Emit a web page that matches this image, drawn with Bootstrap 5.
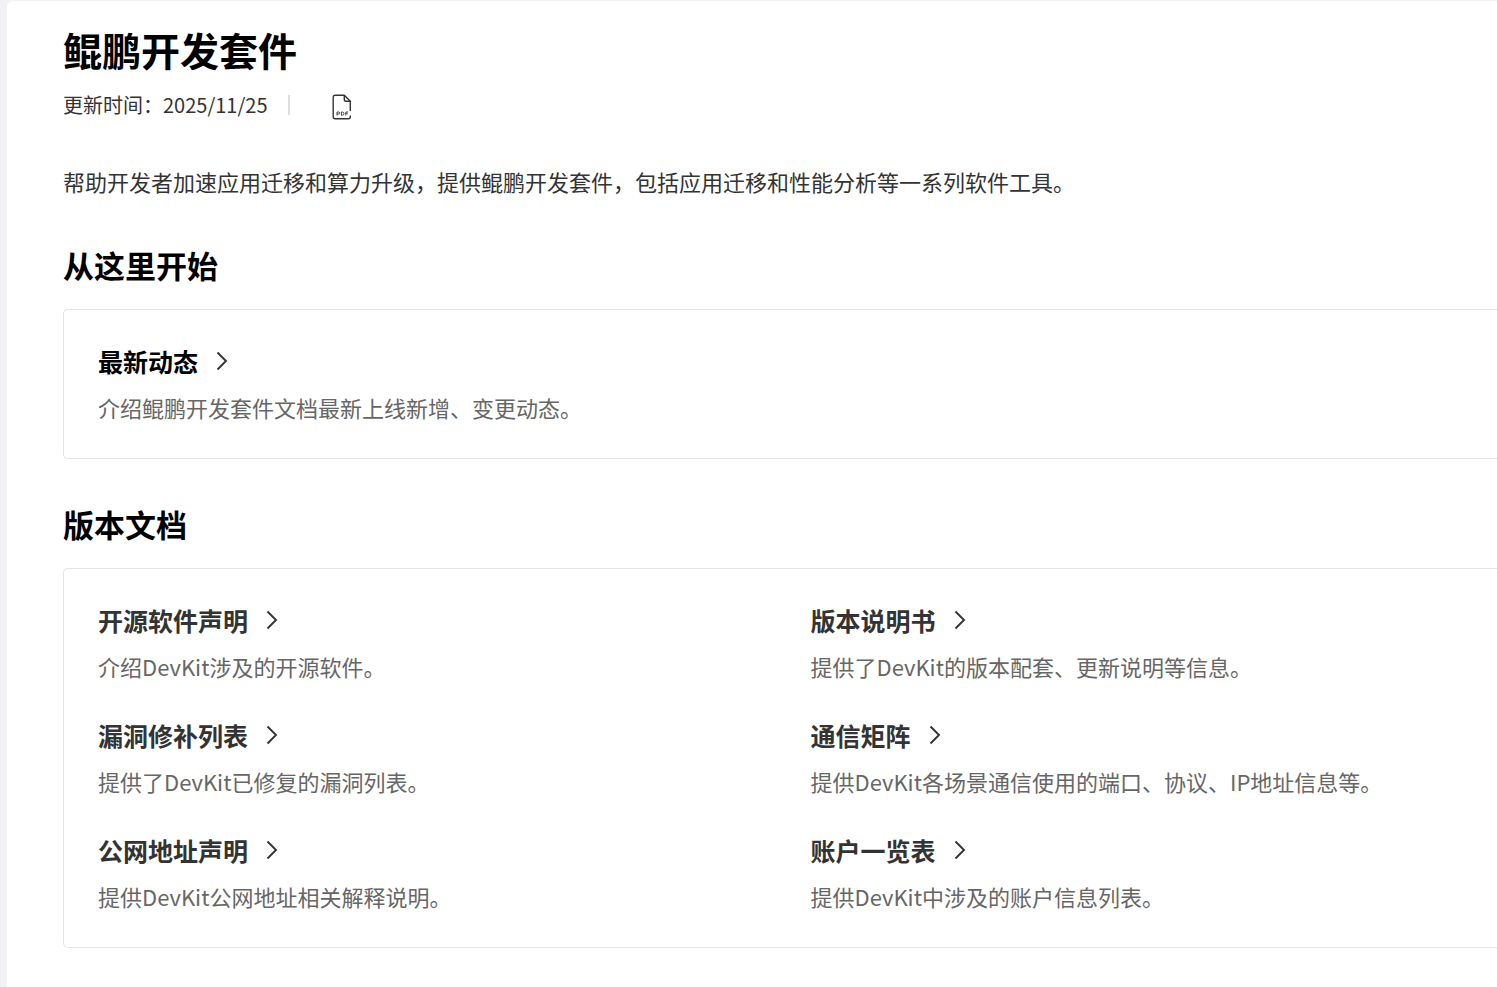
<!DOCTYPE html>
<html lang="zh-CN">
<head>
<meta charset="utf-8">
<meta name="viewport" content="width=device-width, initial-scale=1">
<title>鲲鹏开发套件</title>
<link href="https://cdn.jsdelivr.net/npm/bootstrap@5.3.0/dist/css/bootstrap.min.css" rel="stylesheet">
<style>
  body { background: #f2f2f4; color: #333; font-family: "Noto Sans CJK SC", sans-serif; padding: 1px 0 0 7px; }
  .doc { background: #fff; border-top-left-radius: 6px; min-height: calc(100vh - 1px); padding: 21px 0 38px 56px; }
  .doc-title { font-size: 39px; line-height: 54px; color: #000; margin: 0; }
  .doc-meta { font-size: 20px; line-height: 28px; margin-top: 14px; }
  .meta-rule { width: 2px; height: 20px; background: #dfdfdf; margin: 0 42px 0 21px; }
  .doc-intro { font-size: 22px; line-height: 38px; margin: 42px 0 0; }
  .section-title { font-size: 31px; line-height: 44px; color: #000; margin: 43px 0 22px; }
  .panel { border: 1px solid #e3e3e3; border-right: 0; border-radius: 5px 0 0 5px; padding: 33px 0 33px 34px; }
  .entries { display: grid; grid-template-columns: 1fr 1fr; gap: 33px 26px; }
  .entry-link { font-size: 25px; line-height: 36px; color: #333; font-weight: 700; gap: 18px; }
  .entry-link.lead-link { color: #000; }
  .entry-link svg { color: #333; }
  .entry-text { font-size: 22px; line-height: 36px; color: #666; margin: 10px 0 0; }
  @media (max-width: 900px) { .entries { grid-template-columns: 1fr; } }
</style>
</head>
<body>
<svg class="d-none">
  <symbol id="chevron" viewBox="0 0 12 20"><path d="M1.5 1.5 10 10 1.5 18.5" fill="none" stroke="currentColor" stroke-width="1.9"/></symbol>
</svg>
<main class="doc">
  <h1 class="doc-title fw-bold">鲲鹏开发套件</h1>
  <div class="doc-meta d-flex align-items-center">
    <span>更新时间：2025/11/25</span>
    <span class="meta-rule"></span>
    <a href="#pdf" class="d-flex text-reset pt-1" aria-label="PDF">
      <svg width="20" height="26" viewBox="0 0 20 26" fill="none" stroke="#333" stroke-width="1.4">
        <path d="M18.3 17V7.2L12.3 1.2H3.2Q1.2 1.2 1.2 3.2V22.8Q1.2 24.8 3.2 24.8H16.3Q18.3 24.8 18.3 22.8V21.6"/>
        <path d="M12.3 1.2V5.7Q12.3 7.2 13.8 7.2H18.3"/>
        <path stroke-width="0.9" d="M5 21.5V18H6.5Q7.8 18 7.8 19T6.5 20H5M9.4 18V21.2H10.3Q12 21.2 12 19.6T10.3 18ZM13.8 21.5V18H16.2M13.8 19.7H15.8"/>
      </svg>
    </a>
  </div>
  <p class="doc-intro">帮助开发者加速应用迁移和算力升级，提供鲲鹏开发套件，包括应用迁移和性能分析等一系列软件工具。</p>

  <h2 class="section-title fw-bold">从这里开始</h2>
  <section class="panel">
    <a href="#news" class="entry-link lead-link d-flex align-items-center text-decoration-none">最新动态<svg width="12" height="20"><use href="#chevron"/></svg></a>
    <p class="entry-text">介绍鲲鹏开发套件文档最新上线新增、变更动态。</p>
  </section>

  <h2 class="section-title fw-bold">版本文档</h2>
  <section class="panel entries">
    <div>
      <a href="#oss" class="entry-link d-flex align-items-center text-decoration-none">开源软件声明<svg width="12" height="20"><use href="#chevron"/></svg></a>
      <p class="entry-text">介绍DevKit涉及的开源软件。</p>
    </div>
    <div>
      <a href="#release" class="entry-link d-flex align-items-center text-decoration-none">版本说明书<svg width="12" height="20"><use href="#chevron"/></svg></a>
      <p class="entry-text">提供了DevKit的版本配套、更新说明等信息。</p>
    </div>
    <div>
      <a href="#fixes" class="entry-link d-flex align-items-center text-decoration-none">漏洞修补列表<svg width="12" height="20"><use href="#chevron"/></svg></a>
      <p class="entry-text">提供了DevKit已修复的漏洞列表。</p>
    </div>
    <div>
      <a href="#matrix" class="entry-link d-flex align-items-center text-decoration-none">通信矩阵<svg width="12" height="20"><use href="#chevron"/></svg></a>
      <p class="entry-text">提供DevKit各场景通信使用的端口、协议、IP地址信息等。</p>
    </div>
    <div>
      <a href="#network" class="entry-link d-flex align-items-center text-decoration-none">公网地址声明<svg width="12" height="20"><use href="#chevron"/></svg></a>
      <p class="entry-text">提供DevKit公网地址相关解释说明。</p>
    </div>
    <div>
      <a href="#accounts" class="entry-link d-flex align-items-center text-decoration-none">账户一览表<svg width="12" height="20"><use href="#chevron"/></svg></a>
      <p class="entry-text">提供DevKit中涉及的账户信息列表。</p>
    </div>
  </section>
</main>
<script src="https://cdn.jsdelivr.net/npm/bootstrap@5.3.0/dist/js/bootstrap.bundle.min.js"></script>
</body>
</html>
